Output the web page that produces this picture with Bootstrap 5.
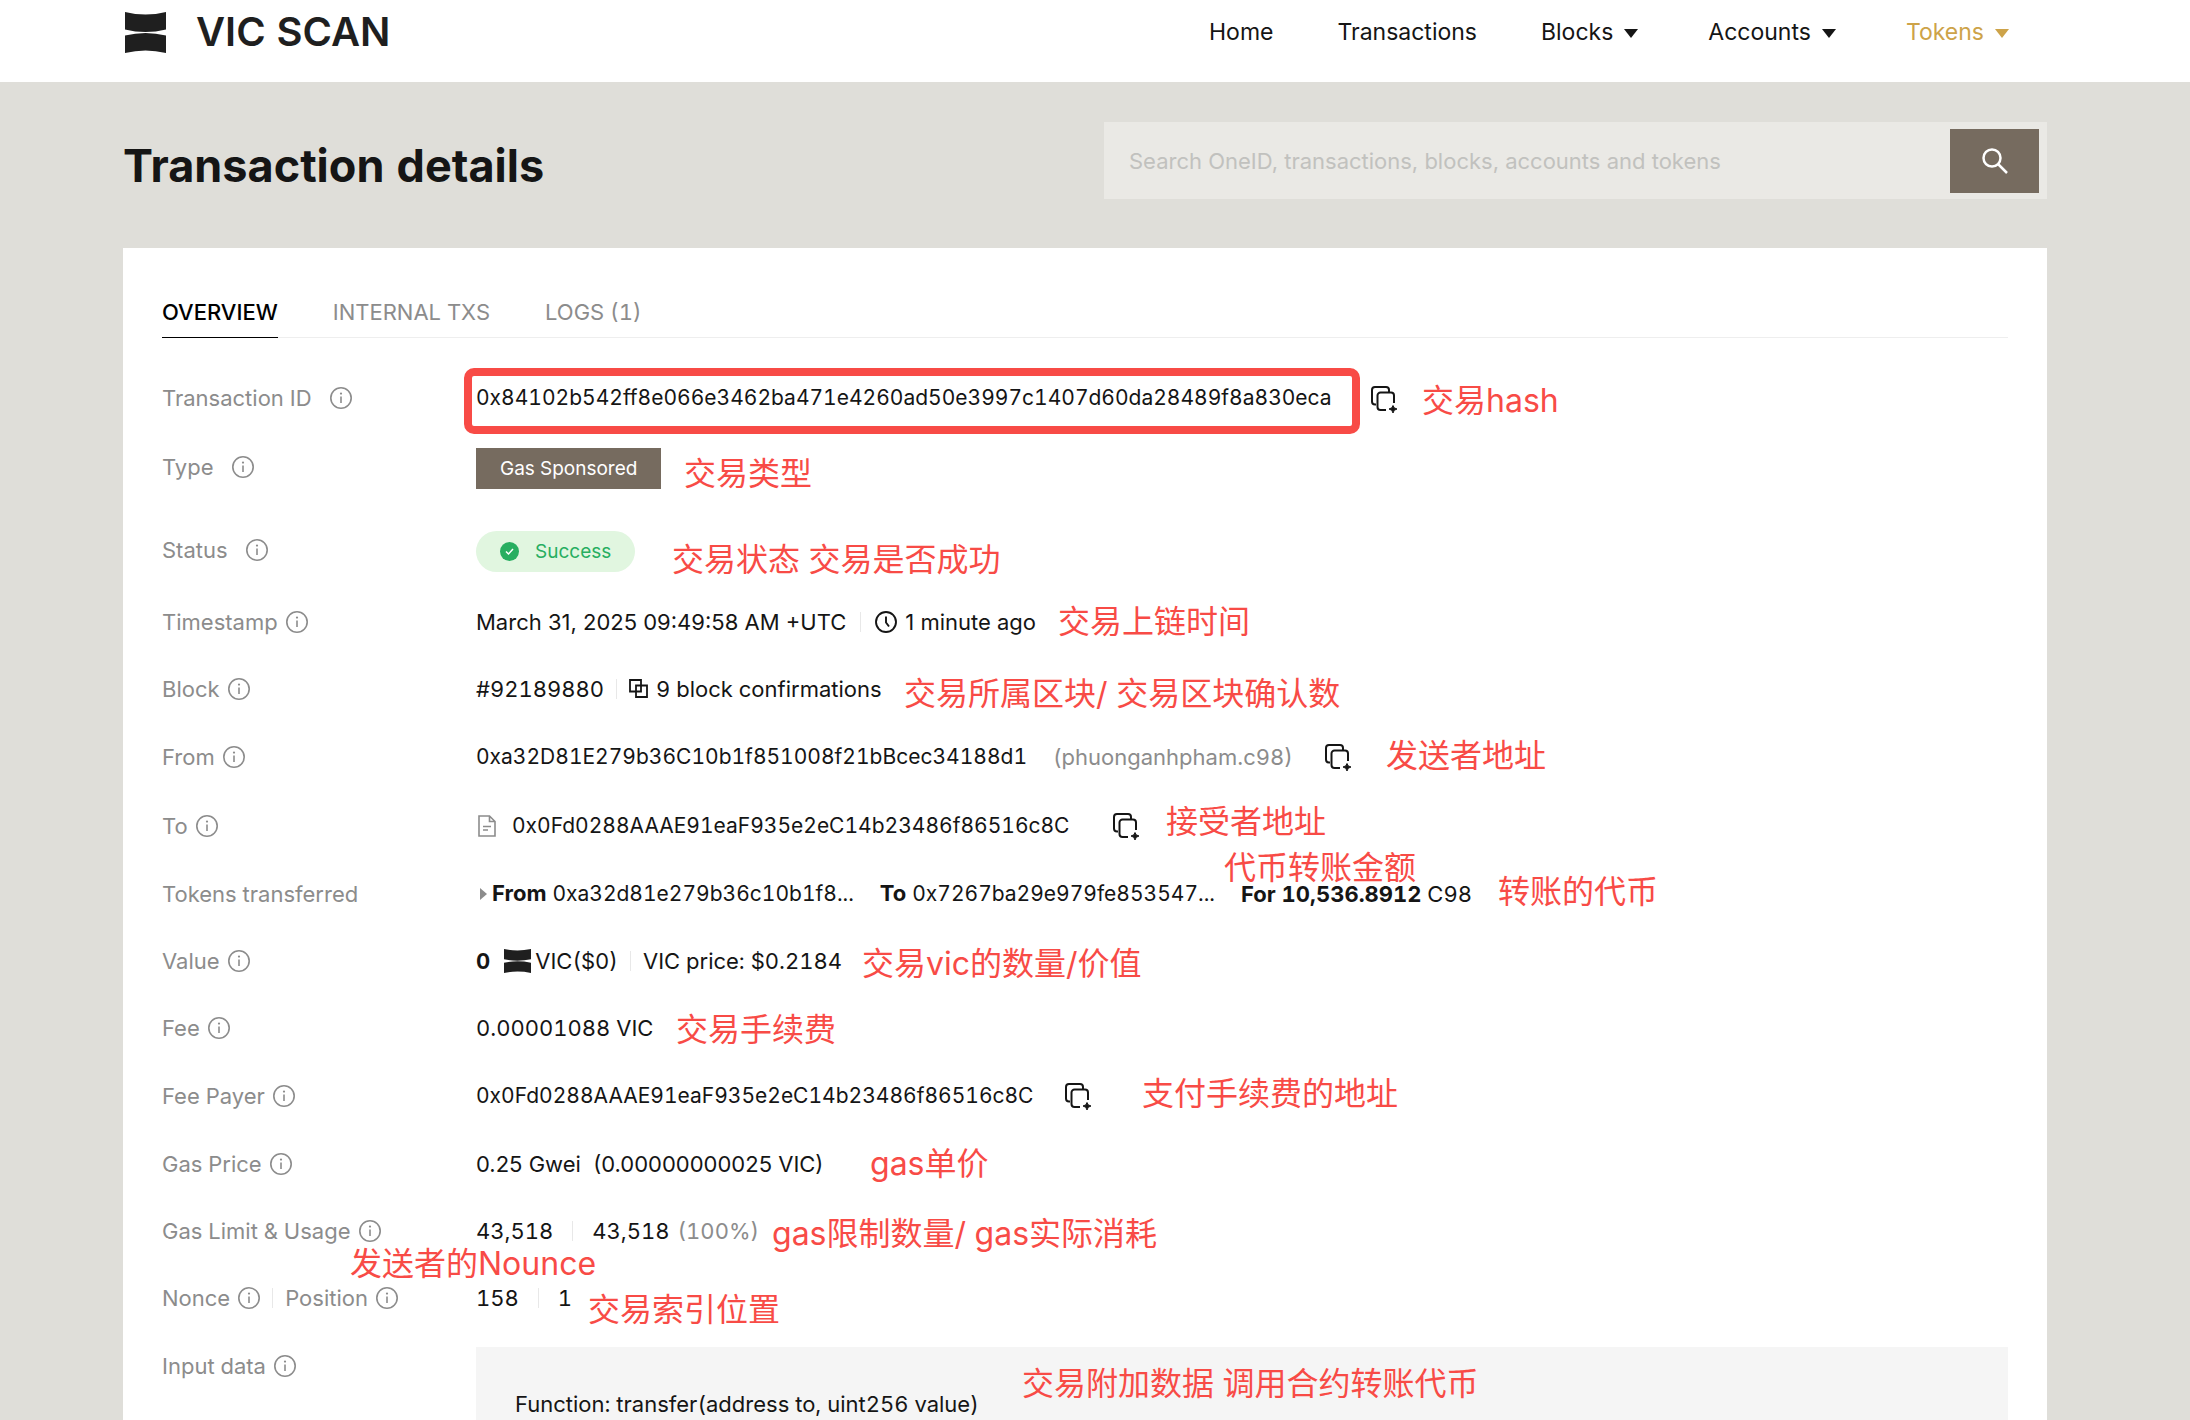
<!DOCTYPE html>
<html lang="en">
<head>
<meta charset="utf-8">
<meta name="viewport" content="width=device-width, initial-scale=1">
<title>VIC SCAN - Transaction details</title>
<link href="https://cdn.jsdelivr.net/npm/bootstrap@5.3.0/dist/css/bootstrap.min.css" rel="stylesheet">
<style>
:root { --ink: #151515; --muted: #8c8c8c; --sand: #dfded9; --umber: #766b5f; --note: #f84b46; }
body { font-family: Inter, "Noto Sans CJK SC", sans-serif; font-size: 22px; line-height: 30px; font-variant-numeric: tabular-nums; color: var(--ink); background: var(--sand); }
a { color: inherit; text-decoration: none; }
.shell { width: 100%; padding: 0 143px 0 123px; }
.topbar { height: 82px; background: #fff; padding-bottom: 18px; }
.brand-name { font-size: 40px; line-height: 44px; font-weight: 600; color: #1f1f1f; }
.topbar .nav-link { padding: 0; font-size: 23px; color: var(--ink); }
.topbar .nav-link.current { color: #cda349; }
.topnav { gap: 64px; padding-right: 32px; }
.caret-down { width: 14px; height: 9px; fill: currentColor; margin: 0 6px 0 11px; }
.page-head { height: 166px; padding-top: 40px; }
.page-title { font-size: 45px; line-height: 60px; font-weight: 700; margin: 14px 0 0; }
.search-box { width: 943px; height: 77px; background: #eae9e5; padding: 7px 8px 6px 25px; }
.search-box .form-control { border: 0; background: transparent; padding: 0; font-size: 22px; height: 48px; border-radius: 0; box-shadow: none; }
.search-box .form-control::placeholder { color: #c1c1be; }
.search-box .btn { width: 89px; height: 64px; border-radius: 0; background: var(--umber); color: #fff; padding: 0; }
.panel { background: #fff; padding: 48px 39px 0; }
.tabs { gap: 55px; border-bottom: 1px solid #eee; }
.tabs .nav-link { padding: 0; height: 42px; line-height: 32px; color: var(--muted); border-bottom: 1px solid transparent; margin-bottom: -1px; }
.tabs .nav-link.active { color: #000; font-weight: 500; border-color: #000; }
.facts { margin: 36px 0 0; }
.fact { min-height: 67px; }
.fact dt { width: 314px; font-weight: 400; color: var(--muted); flex: none; }
.fact dd { margin: 0; flex: 1; }
.fact-id { min-height: 48px; }
.fact-type { min-height: 90px; }
.fact-status { min-height: 76px; }
.fact-copy { min-height: 69px; }
.gap-wide { gap: 18px; }
.gap-near { gap: 8px; }
.rule { width: 1px; height: 20px; background: #e8e8e8; }
.rule-a { margin: 0 14px; }
.rule-b { margin: 0 19px; }
.rule-c { margin: 0 12px; }
.soft { color: var(--muted); }
.i22 { width: 22px; height: 22px; flex: none; }
.copy { border: 0; background: none; padding: 2px 0 0; display: flex; color: #151515; }
.copy svg { width: 26px; height: 27px; }
.hash { font-size: 21px; }
.prop-nums { font-variant-numeric: normal; }
.ringed { position: relative; margin-right: 39px; }
.ringed::after { content: ""; position: absolute; inset: -15px -28px -21px -12px; border: 8px solid var(--note); border-radius: 10px; }
.part-gap { margin-right: 26px; }
.copy-gap { margin-right: 32px; }
.copy-gap-far { margin-right: 44px; }
.tag-gas, .tag-ok { font-size: 19px; line-height: 41px; padding: 0 24px; margin-top: 3px; }
.tag-gas { background: var(--umber); color: #fff; }
.tag-ok { background: #e1f6e0; color: #27ae60; border-radius: 21px; gap: 16px; }
.mark-gap { margin-right: 14px; }
.payload { background: #f5f5f5; padding: 42px 39px 0; }
.fact-input { min-height: 74px; }
.fact-input dt { padding-top: 4px; }
.notes span { position: absolute; font-size: 32px; line-height: 48px; color: var(--note); white-space: nowrap; }
.notes .n-hash { left: 1299px; top: 129px; }
.notes .n-type { left: 561px; top: 202px; }
.notes .n-status { left: 549px; top: 288px; }
.notes .n-time { left: 935px; top: 350px; }
.notes .n-block { left: 781px; top: 422px; }
.notes .n-from { left: 1263px; top: 484px; }
.notes .n-to { left: 1043px; top: 550px; }
.notes .n-amount { left: 1101px; top: 596px; }
.notes .n-token { left: 1375px; top: 620px; }
.notes .n-value { left: 739px; top: 692px; }
.notes .n-fee { left: 553px; top: 758px; }
.notes .n-payer { left: 1019px; top: 822px; }
.notes .n-price { left: 747px; top: 892px; }
.notes .n-limit { left: 649px; top: 962px; }
.notes .n-nonce { left: 227px; top: 992px; }
.notes .n-index { left: 465px; top: 1038px; }
.notes .n-input { left: 899px; top: 1112px; }
</style>
</head>
<body class="min-vh-100 d-flex flex-column">
<svg class="d-none" aria-hidden="true">
  <symbol id="logo" viewBox="0 0 41 41"><path d="M0 0Q20.500 5 41 0V17.500Q20.500 22.500 0 17.500Z M0 23.500Q20.500 18.500 41 23.500V41Q20.500 36 0 41Z"/></symbol>
  <symbol id="info" viewBox="0 0 22 22"><circle cx="11" cy="11" r="10.200" fill="none" stroke="#8c8c8c" stroke-width="1.600"/><circle cx="11" cy="6.600" r="1.100" fill="#8c8c8c"/><path d="M11 9.500V16" stroke="#8c8c8c" stroke-width="1.600"/></symbol>
  <symbol id="copy" viewBox="0 0 26 27"><path d="M5 18.500H4a3 3 0 0 1-3-3V4a3 3 0 0 1 3-3h11a3 3 0 0 1 3 3v2M15 24H9.500a3 3 0 0 1-3-3V9.500a3 3 0 0 1 3-3H20a3 3 0 0 1 3 3V17" fill="none" stroke="currentColor" stroke-width="2"/><path d="M22 19.500Q22.500 22.500 26 23Q22.500 23.500 22 27Q21.500 23.500 18 23Q21.500 22.500 22 19.500Z" fill="currentColor" stroke="currentColor"/></symbol>
  <symbol id="caret" viewBox="0 0 14 9"><path d="M0 0H14L7 9Z"/></symbol>
</svg>

<header class="topbar shell d-flex align-items-center justify-content-between">
  <a href="#" class="d-flex align-items-center">
    <svg width="45" height="41" viewBox="-2 0 45 41" fill="#1f1f1f" class="me-4"><use href="#logo" width="41" height="41"/></svg>
    <span class="brand-name ms-1">VIC SCAN</span>
  </a>
  <nav class="nav topnav" aria-label="Main">
    <a class="nav-link" href="#">Home</a>
    <a class="nav-link" href="#">Transactions</a>
    <a class="nav-link" href="#">Blocks<svg class="caret-down"><use href="#caret"/></svg></a>
    <a class="nav-link" href="#">Accounts<svg class="caret-down"><use href="#caret"/></svg></a>
    <a class="nav-link current" href="#">Tokens<svg class="caret-down"><use href="#caret"/></svg></a>
  </nav>
</header>

<div class="page-head shell d-flex align-items-start justify-content-between">
  <h1 class="page-title">Transaction details</h1>
  <form class="search-box d-flex align-items-center" role="search">
    <input id="q" type="search" class="form-control" aria-label="Search" placeholder="Search OneID, transactions, blocks, accounts and tokens">
    <button type="button" class="btn flex-shrink-0" aria-label="Search">
      <svg width="28" height="28" viewBox="0 0 28 28" fill="none" stroke="currentColor" stroke-width="2.500"><circle cx="11" cy="11" r="8.500"/><path d="M17 17L26 26"/></svg>
    </button>
  </form>
</div>

<main class="shell flex-grow-1 d-flex">
<section class="panel position-relative w-100 d-flex flex-column">
  <nav class="nav tabs" aria-label="Sections">
    <a class="nav-link active" href="#">OVERVIEW</a>
    <a class="nav-link" href="#">INTERNAL TXS</a>
    <a class="nav-link" href="#">LOGS (1)</a>
  </nav>

  <dl class="facts flex-grow-1 d-flex flex-column">
    <div class="fact fact-id d-flex align-items-center">
      <dt class="d-flex align-items-center gap-wide">Transaction ID <svg class="i22"><use href="#info"/></svg></dt>
      <dd class="d-flex align-items-center"><span class="ringed hash">0x84102b542ff8e066e3462ba471e4260ad50e3997c1407d60da28489f8a830eca</span><button class="copy" type="button" aria-label="Copy"><svg><use href="#copy"/></svg></button></dd>
    </div>
    <div class="fact fact-type d-flex align-items-center">
      <dt class="d-flex align-items-center gap-wide">Type <svg class="i22"><use href="#info"/></svg></dt>
      <dd class="d-flex"><span class="tag-gas">Gas Sponsored</span></dd>
    </div>
    <div class="fact fact-status d-flex align-items-center">
      <dt class="d-flex align-items-center gap-wide">Status <svg class="i22"><use href="#info"/></svg></dt>
      <dd class="d-flex"><span class="tag-ok d-flex align-items-center"><svg width="19" height="19" viewBox="0 0 19 19"><circle cx="9.500" cy="9.500" r="9.500" fill="#27ae60"/><path d="M6 9.500L8.500 12L13 7" fill="none" stroke="#fff" stroke-width="1.500"/></svg>Success</span></dd>
    </div>
    <div class="fact d-flex align-items-center">
      <dt class="d-flex align-items-center gap-near">Timestamp <svg class="i22"><use href="#info"/></svg></dt>
      <dd class="d-flex align-items-center prop-nums">March 31, 2025 09:49:58 AM +UTC<span class="rule rule-a"></span><svg class="i22 me-2" viewBox="0 0 22 22" fill="none" stroke="#151515" stroke-width="1.900"><circle cx="11" cy="11" r="10"/><path d="M11 5.500V11.500L14 15.500"/></svg>1 minute ago</dd>
    </div>
    <div class="fact d-flex align-items-center">
      <dt class="d-flex align-items-center gap-near">Block <svg class="i22"><use href="#info"/></svg></dt>
      <dd class="d-flex align-items-center"><a href="#">#92189880</a><span class="rule rule-c"></span><svg width="19" height="19" viewBox="0 0 19 19" fill="none" stroke="#151515" stroke-width="1.800" class="me-2"><path d="M1 1H12V12.500H1ZM7 6.500H18V18H7Z"/></svg>9 block confirmations</dd>
    </div>
    <div class="fact fact-copy d-flex align-items-center">
      <dt class="d-flex align-items-center gap-near">From <svg class="i22"><use href="#info"/></svg></dt>
      <dd class="d-flex align-items-center"><a href="#" class="hash part-gap">0xa32D81E279b36C10b1f851008f21bBcec34188d1</a><span class="soft copy-gap">(phuonganhpham.c98)</span><button class="copy" type="button" aria-label="Copy"><svg><use href="#copy"/></svg></button></dd>
    </div>
    <div class="fact fact-copy d-flex align-items-center">
      <dt class="d-flex align-items-center gap-near">To <svg class="i22"><use href="#info"/></svg></dt>
      <dd class="d-flex align-items-center"><svg width="22" height="22" viewBox="-2 0 22 22" fill="none" stroke="#8c8c8c" stroke-width="1.600" class="mark-gap"><path d="M1 1H11.500L17 6.500V21H1ZM11.500 1V6.500H17M5 11.500H13M5 15H10"/></svg><a href="#" class="hash copy-gap-far">0x0Fd0288AAAE91eaF935e2eC14b23486f86516c8C</a><button class="copy" type="button" aria-label="Copy"><svg><use href="#copy"/></svg></button></dd>
    </div>
    <div class="fact d-flex align-items-center">
      <dt>Tokens transferred</dt>
      <dd class="d-flex align-items-center"><svg width="16" height="12" viewBox="-4 0 16 12" fill="#8c8c8c"><path d="M0 0L7 6L0 12Z"/></svg><span class="part-gap"><b>From</b> <a href="#" class="hash">0xa32d81e279b36c10b1f8...</a></span><span class="part-gap"><b>To</b> <a href="#" class="hash">0x7267ba29e979fe853547...</a></span><span><b>For 10,536.8912</b> C98</span></dd>
    </div>
    <div class="fact d-flex align-items-center">
      <dt class="d-flex align-items-center gap-near">Value <svg class="i22"><use href="#info"/></svg></dt>
      <dd class="d-flex align-items-center"><b class="mark-gap">0</b><svg width="27" height="24" viewBox="0 0 41 41" preserveAspectRatio="none" fill="#1f1f1f" class="me-1"><use href="#logo" width="41" height="41"/></svg>VIC($0)<span class="rule rule-c"></span>VIC price: $0.2184</dd>
    </div>
    <div class="fact d-flex align-items-center">
      <dt class="d-flex align-items-center gap-near">Fee <svg class="i22"><use href="#info"/></svg></dt>
      <dd>0.00001088 VIC</dd>
    </div>
    <div class="fact fact-copy d-flex align-items-center">
      <dt class="d-flex align-items-center gap-near">Fee Payer <svg class="i22"><use href="#info"/></svg></dt>
      <dd class="d-flex align-items-center"><a href="#" class="hash copy-gap">0x0Fd0288AAAE91eaF935e2eC14b23486f86516c8C</a><button class="copy" type="button" aria-label="Copy"><svg><use href="#copy"/></svg></button></dd>
    </div>
    <div class="fact d-flex align-items-center">
      <dt class="d-flex align-items-center gap-near">Gas Price <svg class="i22"><use href="#info"/></svg></dt>
      <dd class="prop-nums">0.25 Gwei&nbsp; (0.00000000025 VIC)</dd>
    </div>
    <div class="fact d-flex align-items-center">
      <dt class="d-flex align-items-center gap-near">Gas Limit &amp; Usage <svg class="i22"><use href="#info"/></svg></dt>
      <dd class="d-flex align-items-center">43,518<span class="rule rule-b"></span>43,518<span class="soft ms-2">(100%)</span></dd>
    </div>
    <div class="fact d-flex align-items-center">
      <dt class="d-flex align-items-center"><span class="d-flex align-items-center gap-near">Nonce <svg class="i22"><use href="#info"/></svg></span><span class="rule rule-c"></span><span class="d-flex align-items-center gap-near">Position <svg class="i22"><use href="#info"/></svg></span></dt>
      <dd class="d-flex align-items-center">158<span class="rule rule-b"></span>1</dd>
    </div>
    <div class="fact fact-input flex-grow-1 d-flex mt-3">
      <dt><span class="d-flex align-items-center gap-near">Input data <svg class="i22"><use href="#info"/></svg></span></dt>
      <dd class="payload">Function: transfer(address to, uint256 value)</dd>
    </div>
  </dl>

  <div class="notes" lang="zh-CN">
    <span class="n-hash">交易hash</span>
    <span class="n-type">交易类型</span>
    <span class="n-status">交易状态 交易是否成功</span>
    <span class="n-time">交易上链时间</span>
    <span class="n-block">交易所属区块/ 交易区块确认数</span>
    <span class="n-from">发送者地址</span>
    <span class="n-to">接受者地址</span>
    <span class="n-amount">代币转账金额</span>
    <span class="n-token">转账的代币</span>
    <span class="n-value">交易vic的数量/价值</span>
    <span class="n-fee">交易手续费</span>
    <span class="n-payer">支付手续费的地址</span>
    <span class="n-price">gas单价</span>
    <span class="n-limit">gas限制数量/ gas实际消耗</span>
    <span class="n-nonce">发送者的Nounce</span>
    <span class="n-index">交易索引位置</span>
    <span class="n-input">交易附加数据 调用合约转账代币</span>
  </div>
</section>
</main>
<script src="https://cdn.jsdelivr.net/npm/bootstrap@5.3.0/dist/js/bootstrap.bundle.min.js"></script>
</body>
</html>
